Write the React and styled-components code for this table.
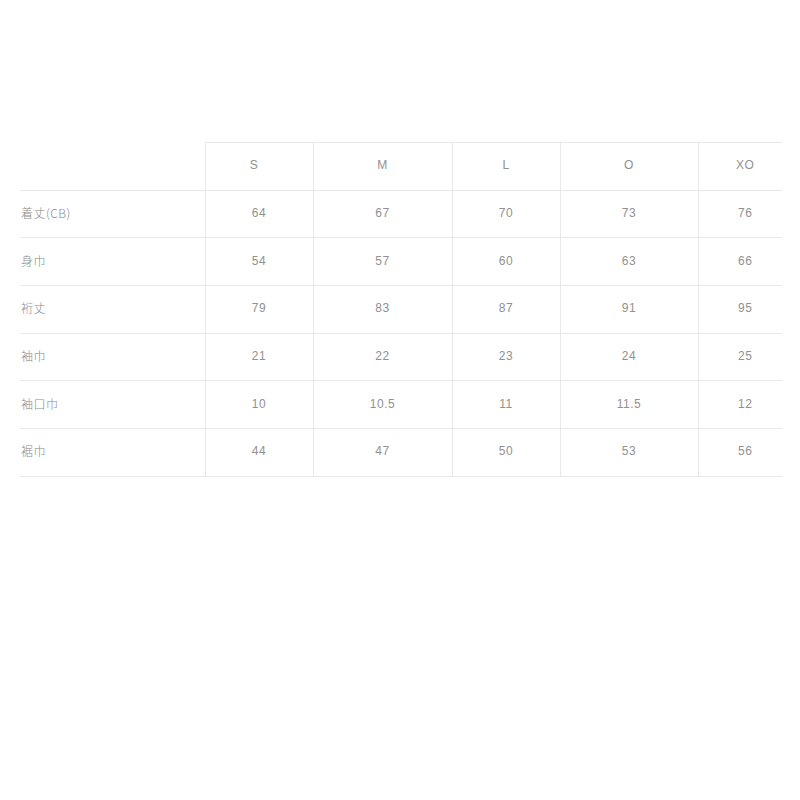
import styled, { createGlobalStyle } from 'styled-components';

const GlobalStyle = createGlobalStyle`
  body {
    margin: 0;
    background: #fff;
    font-family: "Liberation Sans", "Noto Sans CJK JP", sans-serif;
  }
`;

const Page = styled.div`
  padding: 142px 18px 0 20px;
`;

const SizeTable = styled.table`
  width: 762px;
  border-collapse: collapse;
  table-layout: fixed;
  font-size: 12px;
  line-height: 14px;
  letter-spacing: 0.5px;
  color: #919191;
`;

const Row = styled.tr`
  height: 47.7px;
  border-bottom: 1px solid #e8e8e8;
`;

const HeadCell = styled.th`
  font-weight: 400;
  text-align: center;
  padding: 0 ${p => (p.$first ? '10px' : '0')} 2px ${p => (p.$last ? '10px' : '0')};
  border-top: ${p => (p.$blank ? 'none' : '1px solid #e8e8e8')};
  border-left: ${p => (p.$blank ? 'none' : '1px solid #e8e8e8')};
`;

const LabelCell = styled.td`
  text-align: left;
  padding: 0 0 2px 1px;
  border-right: 1px solid #e8e8e8;
  font-family: "Noto Sans CJK JP", sans-serif;
  font-weight: 300;
  color: #8a8a8a;
`;

const ValueCell = styled.td`
  text-align: center;
  padding: 0 0 2px ${p => (p.$last ? '10px' : '0')};
  border-left: 1px solid #e8e8e8;
`;

const sizes = ['S', 'M', 'L', 'O', 'XO'];
const widths = [185, 108, 139, 108, 138, 84];

const rows = [
  { label: '着丈(CB)', values: ['64', '67', '70', '73', '76'] },
  { label: '身巾', values: ['54', '57', '60', '63', '66'] },
  { label: '裄丈', values: ['79', '83', '87', '91', '95'] },
  { label: '袖巾', values: ['21', '22', '23', '24', '25'] },
  { label: '袖口巾', values: ['10', '10.5', '11', '11.5', '12'] },
  { label: '裾巾', values: ['44', '47', '50', '53', '56'] },
];

const App = () => {
  return (
    <Page>
      <GlobalStyle />
      <SizeTable>
        <colgroup>
          {widths.map((w, i) => (
            <col key={i} style={{ width: w }} />
          ))}
        </colgroup>
        <thead>
          <Row>
            <HeadCell $blank />
            {sizes.map((s, i) => (
              <HeadCell key={s} $first={i === 0} $last={i === sizes.length - 1}>
                {s}
              </HeadCell>
            ))}
          </Row>
        </thead>
        <tbody>
          {rows.map(row => (
            <Row key={row.label}>
              <LabelCell>{row.label}</LabelCell>
              {row.values.map((v, i) => (
                <ValueCell key={i} $last={i === row.values.length - 1}>
                  {v}
                </ValueCell>
              ))}
            </Row>
          ))}
        </tbody>
      </SizeTable>
    </Page>
  );
};

export default App;
